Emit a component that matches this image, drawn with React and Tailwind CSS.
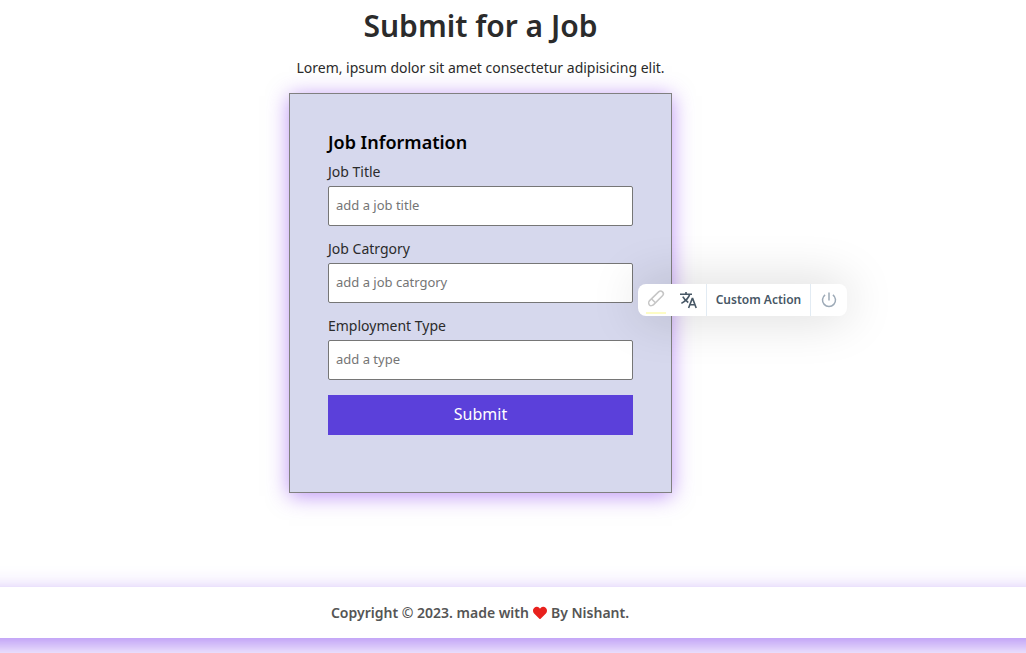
import { FaHeart } from "react-icons/fa";

const fields = [
  { id: "title", label: "Job Title", placeholder: "add a job title" },
  { id: "category", label: "Job Catrgory", placeholder: "add a job catrgory" },
  { id: "type", label: "Employment Type", placeholder: "add a type" },
];

function Field({ id, label, placeholder }) {
  return (
    <div className="mb-[15px]">
      <label htmlFor={id} className="block text-sm leading-4 pb-1.5 text-[#2b2b2b]">
        {label}
      </label>
      <input
        id={id}
        type="text"
        placeholder={placeholder}
        className="block h-10 w-full rounded-xs border border-[#767676] bg-white px-[7px] pb-0.5 text-[13px] text-black placeholder:text-[#757575]"
      />
    </div>
  );
}

function ActionToolbar() {
  return (
    <div
      role="toolbar"
      aria-label="Quick actions"
      className="absolute top-[191px] left-[349px] flex h-8 w-[209px] rounded-lg bg-white font-['Noto_Sans',sans-serif] shadow-[0_0_50px_rgba(0,0,0,0.18)]"
    >
      <button type="button" aria-label="Highlight" className="flex w-9 shrink-0 flex-col items-center justify-end">
        <svg width="20" height="20" viewBox="0 0 20 20" fill="none" stroke="#c6c6c6" strokeWidth="1.5" strokeLinejoin="round">
          <path d="M3.6 11.6 12.6 2.9a2.75 2.75 0 0 1 3.9 3.9L7.6 15.6c-1.2 1.2-3.2 1.4-4.2.4s-.9-3.2.2-4.4Z" transform="translate(0 1)" />
          <path d="m5.4 10.8 4 4" />
        </svg>
        <span className="mt-1 mb-0.5 h-0.5 w-5 shrink-0 bg-[#fdfcc5]" />
      </button>
      <button type="button" aria-label="Translate" className="flex w-8 shrink-0 items-center justify-center pr-1">
        <svg width="18" height="18" viewBox="0 0 18 18" fill="none" stroke="#475765" strokeWidth="1.6">
          <path d="M1 3.3h12M7 1v2.3M10.7 3.3C9.8 7 6.4 10.1 2.4 12.4M3.8 5.7c1.2 2.3 3.2 4.4 5.5 5.8" />
          <path d="m9.6 17 3.6-9.4h.5L17.2 17M10.8 13.8h5.2" />
        </svg>
      </button>
      <button type="button" className="flex-1 border-x border-[#e2ebf3] text-xs font-semibold whitespace-nowrap text-[#475765]">
        Custom Action
      </button>
      <button type="button" aria-label="Turn off" className="flex w-9 shrink-0 items-center justify-center">
        <svg width="16" height="16" viewBox="0 0 16 16" fill="none" stroke="#9daab7" strokeWidth="1.5">
          <path d="M8 .5v8M4.1 2.8a6.5 6.5 0 1 0 7.8 0" />
        </svg>
      </button>
    </div>
  );
}

export default function App() {
  return (
    <div className="min-h-screen overflow-hidden bg-white font-['Noto_Sans',sans-serif]">
      <main className="flex flex-col items-center pt-1.5 pr-[66px] pb-[94px] pl-px">
        <h1 className="text-3xl leading-10 font-semibold text-[#2b2b2b]">Submit for a Job</h1>
        <p className="mt-3 mb-[15px] text-sm leading-5 whitespace-nowrap text-[#2b2b2b]">
          Lorem, ipsum dolor sit amet consectetur adipisicing elit.
        </p>
        <div className="relative w-full max-w-[383px]">
          <form
            onSubmit={(e) => e.preventDefault()}
            className="border border-[#808080] bg-[#d6d8ed] px-[38px] pt-[38px] pb-[57px] shadow-[0_3px_20px_rgba(124,40,235,0.5)]"
          >
            <h2 className="mb-3 text-lg leading-5 font-semibold text-black">Job Information</h2>
            {fields.map((field) => (
              <Field key={field.id} {...field} />
            ))}
            <button type="submit" className="block h-10 w-full bg-[#5b40da] pb-0.5 text-base text-white">
              Submit
            </button>
          </form>
          <ActionToolbar />
        </div>
      </main>
      <footer className="-mx-8 bg-white pr-[66px] shadow-[0_8px_24px_rgba(124,58,237,0.6)]">
        <p className="flex h-[51px] items-center justify-center gap-1 text-sm font-semibold text-[#555555]">
          Copyright © 2023. made with <FaHeart aria-label="love" className="size-3.5 text-[#e8211d]" /> By Nishant.
        </p>
      </footer>
      <div className="h-[15px]" />
    </div>
  );
}
